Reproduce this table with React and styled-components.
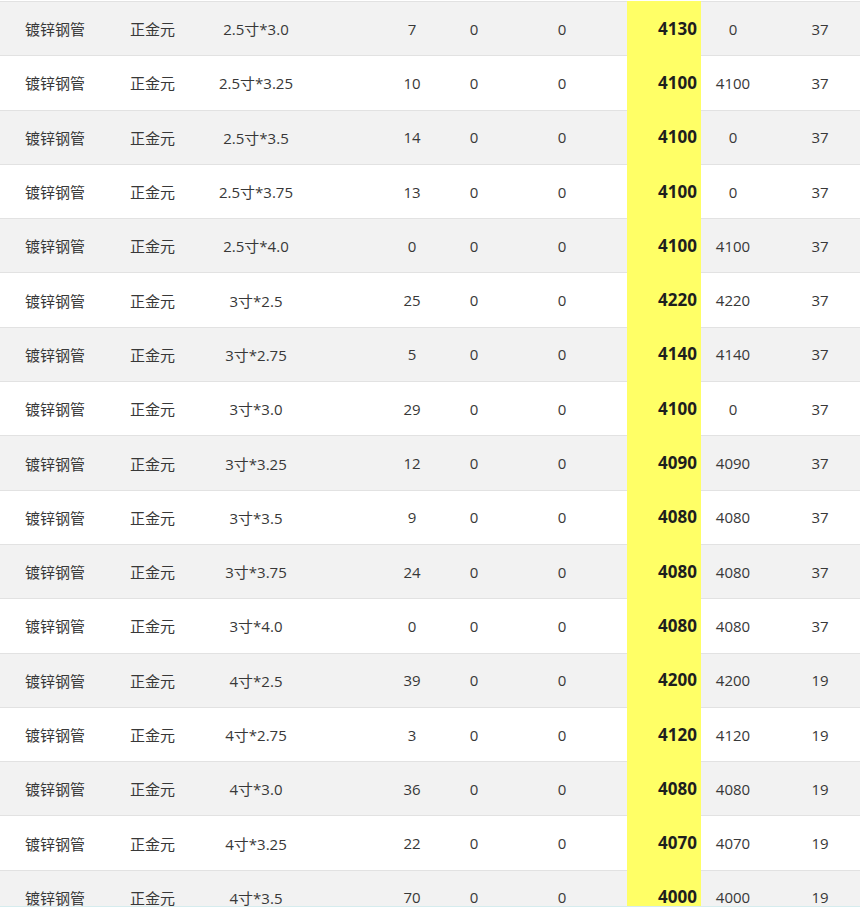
import React from 'react'
import styled, { createGlobalStyle } from 'styled-components'

const GlobalStyle = createGlobalStyle`
  html, body {
    margin: 0;
    padding: 0;
    background: #fff;
    overflow: hidden;
  }
  body {
    font-family: "Open Sans", "Noto Sans CJK SC", sans-serif;
  }
`

// 品名, 产地, 规格, 库存, 在途, 锁定, 价格, 昨价, 支数
const rows = [
  ['2.5寸*3.0', 7, 4130, 0, 37],
  ['2.5寸*3.25', 10, 4100, 4100, 37],
  ['2.5寸*3.5', 14, 4100, 0, 37],
  ['2.5寸*3.75', 13, 4100, 0, 37],
  ['2.5寸*4.0', 0, 4100, 4100, 37],
  ['3寸*2.5', 25, 4220, 4220, 37],
  ['3寸*2.75', 5, 4140, 4140, 37],
  ['3寸*3.0', 29, 4100, 0, 37],
  ['3寸*3.25', 12, 4090, 4090, 37],
  ['3寸*3.5', 9, 4080, 4080, 37],
  ['3寸*3.75', 24, 4080, 4080, 37],
  ['3寸*4.0', 0, 4080, 4080, 37],
  ['4寸*2.5', 39, 4200, 4200, 19],
  ['4寸*2.75', 3, 4120, 4120, 19],
  ['4寸*3.0', 36, 4080, 4080, 19],
  ['4寸*3.25', 22, 4070, 4070, 19],
  ['4寸*3.5', 70, 4000, 4000, 19],
]

const Frame = styled.div`
  height: 907px;
  overflow: hidden;
  border-bottom: 1px solid #d6ecee;
  padding-top: 1px;
  box-sizing: border-box;
`

const Row = styled.div`
  display: grid;
  grid-template-columns: 110px 85px 186px 62px 62px 122px 74px 64px 95px;
  height: 54.3px;
  box-sizing: border-box;
  border-top: 1px solid #e2e2e2;
  background: ${p => (p.$odd ? '#f2f2f2' : '#fff')};
`

const Cell = styled.div`
  display: flex;
  align-items: center;
  justify-content: center;
  font-size: 15px;
  color: #383838;
  padding-left: ${p => p.$pl || 0}px;
  padding-right: ${p => p.$pr || 0}px;
  white-space: nowrap;
`

const Price = styled.div`
  display: flex;
  align-items: center;
  justify-content: flex-end;
  padding-right: 4px;
  margin-top: -1px;
  background: #ffff66;
  font-size: 17px;
  font-weight: 700;
  color: #1e1e1e;
`

export default function App() {
  return (
    <>
      <GlobalStyle />
      <Frame>
        {rows.map(([spec, stock, price, last, count], i) => (
          <Row key={i} $odd={i % 2 === 0}>
            <Cell>镀锌钢管</Cell>
            <Cell>正金元</Cell>
            <Cell $pr={64}>{spec}</Cell>
            <Cell>{stock}</Cell>
            <Cell>0</Cell>
            <Cell $pr={8}>0</Cell>
            <Price>{price}</Price>
            <Cell>{last}</Cell>
            <Cell $pl={15}>{count}</Cell>
          </Row>
        ))}
      </Frame>
    </>
  )
}
